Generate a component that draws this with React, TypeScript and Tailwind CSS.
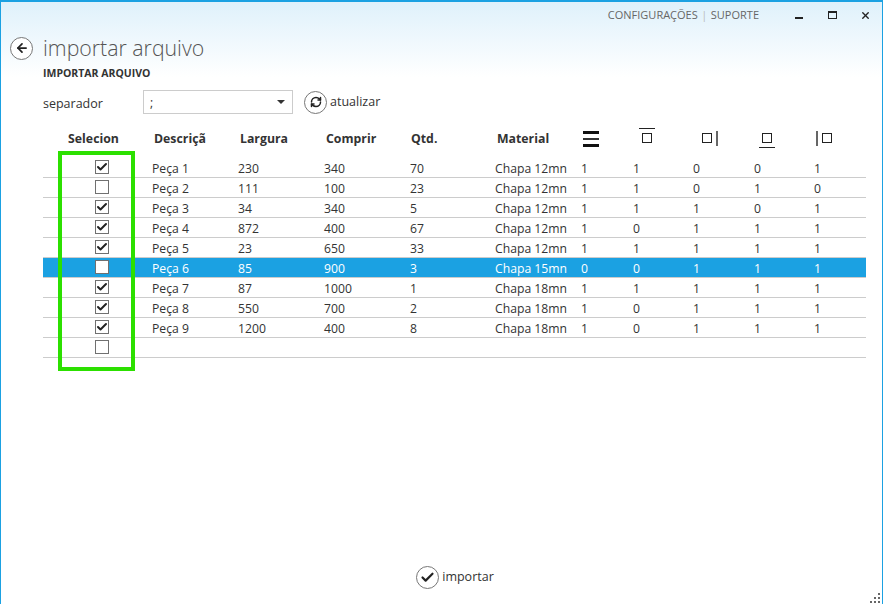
import { Check, ArrowLeft, RefreshCw, X } from "lucide-react";

const rows = [
  { on: true, name: "Peça 1", w: "230", c: "340", q: "70", m: "Chapa 12mn", e: [1, 1, 0, 0, 1] },
  { on: false, name: "Peça 2", w: "111", c: "100", q: "23", m: "Chapa 12mn", e: [1, 1, 0, 1, 0] },
  { on: true, name: "Peça 3", w: "34", c: "340", q: "5", m: "Chapa 12mn", e: [1, 1, 1, 0, 1] },
  { on: true, name: "Peça 4", w: "872", c: "400", q: "67", m: "Chapa 12mn", e: [1, 0, 1, 1, 1] },
  { on: true, name: "Peça 5", w: "23", c: "650", q: "33", m: "Chapa 12mn", e: [1, 1, 1, 1, 1] },
  { on: false, name: "Peça 6", w: "85", c: "900", q: "3", m: "Chapa 15mn", e: [0, 0, 1, 1, 1], selected: true },
  { on: true, name: "Peça 7", w: "87", c: "1000", q: "1", m: "Chapa 18mn", e: [1, 1, 1, 1, 1] },
  { on: true, name: "Peça 8", w: "550", c: "700", q: "2", m: "Chapa 18mn", e: [1, 0, 1, 1, 1] },
  { on: true, name: "Peça 9", w: "1200", c: "400", q: "8", m: "Chapa 18mn", e: [1, 0, 1, 1, 1] },
];

const headCols = "grid grid-cols-[109px_86px_86px_86px_85px_87px_56px_60px_60px_60px_1fr]";
const rowCols = "grid grid-cols-[109px_86px_86px_86px_85px_86px_52px_60px_61px_60px_1fr]";

function Box({ on }: { on: boolean }) {
  return (
    <div className="-mt-[5px] ml-[52px] flex h-[14px] w-[14px] items-center justify-center border border-[#707070] bg-white">
      {on && <Check size={12} strokeWidth={4} className="text-[#222]" />}
    </div>
  );
}

function EdgeIcon({ side }: { side: "top" | "right" | "bottom" | "left" }) {
  return (
    <svg width="24" height="24" viewBox="0 0 24 24" className={side === "left" ? "-ml-[3px] block" : "block"}>
      {side === "top" && (
        <>
          <rect x="4.5" y="6.5" width="9" height="9" fill="none" stroke="#222" />
          <rect x="1" y="1" width="16" height="1" fill="#222" />
        </>
      )}
      {side === "right" && (
        <>
          <rect x="4.5" y="6.5" width="9" height="9" fill="none" stroke="#222" />
          <rect x="18" y="4" width="2" height="15" fill="#666" />
        </>
      )}
      {side === "bottom" && (
        <>
          <rect x="4.5" y="6.5" width="9" height="9" fill="none" stroke="#222" />
          <rect x="1" y="20" width="16" height="1" fill="#222" />
        </>
      )}
      {side === "left" && (
        <>
          <rect x="7.5" y="6.5" width="9" height="9" fill="none" stroke="#222" />
          <rect x="1" y="4" width="2" height="15" fill="#666" />
        </>
      )}
    </svg>
  );
}

function RoundIcon({ children }: { children: React.ReactNode }) {
  return (
    <div className="flex h-[23px] w-[23px] items-center justify-center rounded-full border border-[#777] bg-white text-[#222]">
      {children}
    </div>
  );
}

export default function App() {
  return (
    <div className="relative flex h-[604px] w-[883px] flex-col overflow-hidden border-x border-t-2 border-x-[#1ba1e2] border-t-[#1ba1e2] bg-[linear-gradient(180deg,#dff1fb_0px,#ffffff_75px)] font-['Open_Sans',sans-serif] text-[12.2px] text-[#333]">
      {/* top bar */}
      <div className="flex h-[26px] items-center justify-end text-[11px] text-[#666]">
        <span>CONFIGURAÇÕES</span>
        <span className="mx-[3.5px] text-[#bbb]">|</span>
        <span>SUPORTE</span>
        <div className="ml-[36px] mr-[11px] flex items-center text-[#222]">
          <div className="mt-[5px] h-[2px] w-[8px] bg-[#222]" />
          <div className="ml-[25px] -mt-[1px] h-[8px] w-[9px] border border-t-2 border-[#222]" />
          <X size={11} strokeWidth={3} className="ml-[23px]" />
        </div>
      </div>

      <div className="ml-[9px] mt-[6px] flex h-[28px] items-center gap-[10px]">
        <RoundIcon>
          <ArrowLeft size={14} strokeWidth={3} />
        </RoundIcon>
        <span className="whitespace-nowrap text-[21.3px] font-light text-[#555]">importar arquivo</span>
      </div>

      <div className="ml-[42px] mt-[4px] text-[10.5px] font-bold leading-[14px] text-[#333]">IMPORTAR ARQUIVO</div>

      <div className="ml-[42px] mt-[10px] flex h-[24px] items-center">
        <span className="mt-[4px] w-[100px] text-[12.5px]">separador</span>
        <div className="flex h-[24px] w-[150px] items-center justify-between border border-[#ccc] bg-white pl-[6px] pr-[7px]">
          <span className="mt-[3px]">;</span>
          <span className="h-0 w-0 border-x-[4px] border-t-[4px] border-x-transparent border-t-[#333]" />
        </div>
        <div className="ml-[11px] flex items-center gap-[3px]">
          <RoundIcon>
            <RefreshCw size={12} strokeWidth={3} />
          </RoundIcon>
          <span className="mt-[1px] text-[12.5px]">atualizar</span>
        </div>
      </div>

      {/* table */}
      <div className="ml-[42px] mt-[8px] w-[823px]">
        <div className={`${headCols} h-[34px] items-center text-[12.3px] font-bold text-[#333]`}>
          <span className="pr-[8px] text-center">Selecion</span>
          <span className="overflow-hidden pl-[2px]">Descriçã</span>
          <span className="pl-[2px]">Largura</span>
          <span className="pl-[2px]">Comprir</span>
          <span className="pl-[1px]">Qtd.</span>
          <span className="pl-[2px]">Material</span>
          <div className="ml-[1px] flex flex-col gap-[4px]">
            <div className="h-[3px] w-[16px] bg-[#111]" />
            <div className="h-[2px] w-[16px] bg-[#333]" />
            <div className="h-[3px] w-[16px] bg-[#111]" />
          </div>
          <EdgeIcon side="top" />
          <EdgeIcon side="right" />
          <EdgeIcon side="bottom" />
          <EdgeIcon side="left" />
        </div>
        <div className="mt-[2px]">
          {rows.map((r) => (
            <div
              key={r.name}
              className={`${rowCols} h-[20px] items-center whitespace-nowrap border-b border-[#ccc] pt-[2px] ${r.selected ? "bg-[#1ba1e2] text-white" : ""}`}
            >
              <Box on={r.on} />
              <span>{r.name}</span>
              <span>{r.w}</span>
              <span>{r.c}</span>
              <span>{r.q}</span>
              <span>{r.m}</span>
              {r.e.map((v, i) => (
                <span key={i}>{v}</span>
              ))}
            </div>
          ))}
          <div className={`${rowCols} h-[20px] items-center border-b border-[#ccc] pt-[2px]`}>
            <Box on={false} />
            <span>&nbsp;</span>
          </div>
        </div>
      </div>

      <div className="mt-auto mb-[15px] flex items-center justify-center gap-[3px] pl-[27px]">
        <RoundIcon>
          <Check size={15} strokeWidth={3.5} />
        </RoundIcon>
        <span className="text-[12.5px]">importar</span>
      </div>

      {/* highlight drawn over the table */}
      <div className="absolute left-[57px] top-[149px] h-[220px] w-[77px] border-4 border-[#2ce000]" />

      {/* resize grip */}
      <div className="absolute bottom-[1px] right-[2px] grid grid-cols-3 gap-[2px]">
        {[0, 0, 1, 0, 1, 1, 1, 1, 1].map((v, i) => (
          <div key={i} className={`h-[2px] w-[2px] ${v ? "bg-[#666]" : ""}`} />
        ))}
      </div>
    </div>
  );
}
